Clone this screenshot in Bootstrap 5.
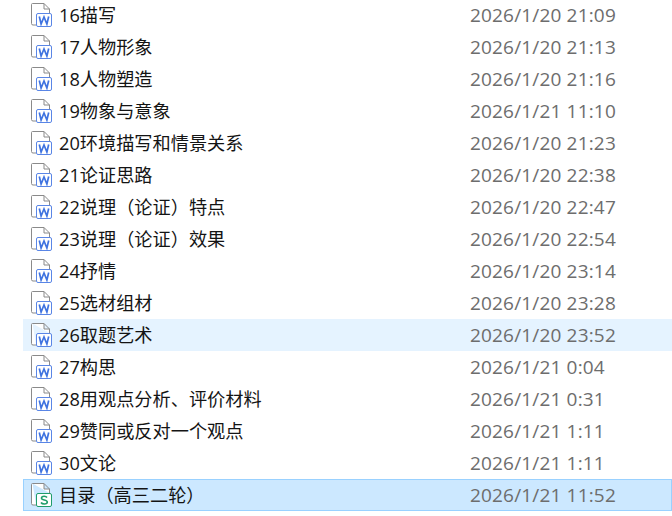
<!DOCTYPE html>
<html lang="zh"><head><meta charset="utf-8">
<link href="https://cdn.jsdelivr.net/npm/bootstrap@5.3.0/dist/css/bootstrap.min.css" rel="stylesheet">
<style>
html,body{height:516px;overflow:hidden;background:#fff}
body{font-family:"Open Sans","Noto Sans CJK SC",sans-serif;font-size:18.2px}
.flist{margin:-1px 0 0 23px}
.frow{height:32px;border:1px solid transparent}
.frow.hov{background:#e5f3ff;border-color:#e5f3ff}
.frow.sel{background:#cce8ff;border-color:#99d1ff}
.ficon{width:24px;height:24px;margin-left:6px;flex:none}
.fname{width:411px;margin-left:5px;color:#141414;white-space:nowrap;line-height:30px}
.fdate{color:#6d6d6d;white-space:nowrap;line-height:30px;font-size:19px;letter-spacing:.17px}
</style></head><body>
<svg width="0" height="0" class="position-absolute"><defs>
<symbol id="w" viewBox="0 0 24 24"><path d="M2.500.5H14L19.500 6V10M2.500.5Q1.500.5 1.500 1.500V20.500Q1.500 22 3 22H6M14 .5V6H19.500" fill="#fff" stroke="#8a8a8a"/><rect x="6.500" y="10.500" width="15" height="13" rx="1.500" fill="#fff" stroke="#5a86e6"/><path d="M9.300 13.500l1.800 7.500 2.900-7 2.900 7 1.800-7.500" fill="none" stroke="#3f73e0" stroke-width="1.700"/></symbol>
<symbol id="s" viewBox="0 0 24 24"><path d="M2.500.5H14L19.500 6V10M2.500.5Q1.500.5 1.500 1.500V20.500Q1.500 22 3 22H6M14 .5V6H19.500" fill="#fff" stroke="#8a8a8a"/><rect x="6.500" y="10.500" width="15" height="13" rx="1.500" fill="#fff" stroke="#1f9d6b"/><path d="M17 14.500Q16.200 13.200 14.200 13.200Q11.500 13.200 11.500 15.200C11.500 17.500 17.300 16.500 17.300 19Q17.300 21 14.300 21Q12 21 11 19.500" fill="none" stroke="#1f9d6b" stroke-width="1.600"/></symbol>
</defs></svg>
<div class="flist d-flex flex-column">
<div class="frow d-flex align-items-center"><svg class="ficon"><use href="#w"/></svg><div class="fname">16描写</div><div class="fdate">2026/1/20 21:09</div></div>
<div class="frow d-flex align-items-center"><svg class="ficon"><use href="#w"/></svg><div class="fname">17人物形象</div><div class="fdate">2026/1/20 21:13</div></div>
<div class="frow d-flex align-items-center"><svg class="ficon"><use href="#w"/></svg><div class="fname">18人物塑造</div><div class="fdate">2026/1/20 21:16</div></div>
<div class="frow d-flex align-items-center"><svg class="ficon"><use href="#w"/></svg><div class="fname">19物象与意象</div><div class="fdate">2026/1/21 11:10</div></div>
<div class="frow d-flex align-items-center"><svg class="ficon"><use href="#w"/></svg><div class="fname">20环境描写和情景关系</div><div class="fdate">2026/1/20 21:23</div></div>
<div class="frow d-flex align-items-center"><svg class="ficon"><use href="#w"/></svg><div class="fname">21论证思路</div><div class="fdate">2026/1/20 22:38</div></div>
<div class="frow d-flex align-items-center"><svg class="ficon"><use href="#w"/></svg><div class="fname">22说理（论证）特点</div><div class="fdate">2026/1/20 22:47</div></div>
<div class="frow d-flex align-items-center"><svg class="ficon"><use href="#w"/></svg><div class="fname">23说理（论证）效果</div><div class="fdate">2026/1/20 22:54</div></div>
<div class="frow d-flex align-items-center"><svg class="ficon"><use href="#w"/></svg><div class="fname">24抒情</div><div class="fdate">2026/1/20 23:14</div></div>
<div class="frow d-flex align-items-center"><svg class="ficon"><use href="#w"/></svg><div class="fname">25选材组材</div><div class="fdate">2026/1/20 23:28</div></div>
<div class="frow hov d-flex align-items-center"><svg class="ficon"><use href="#w"/></svg><div class="fname">26取题艺术</div><div class="fdate">2026/1/20 23:52</div></div>
<div class="frow d-flex align-items-center"><svg class="ficon"><use href="#w"/></svg><div class="fname">27构思</div><div class="fdate">2026/1/21 0:04</div></div>
<div class="frow d-flex align-items-center"><svg class="ficon"><use href="#w"/></svg><div class="fname">28用观点分析、评价材料</div><div class="fdate">2026/1/21 0:31</div></div>
<div class="frow d-flex align-items-center"><svg class="ficon"><use href="#w"/></svg><div class="fname">29赞同或反对一个观点</div><div class="fdate">2026/1/21 1:11</div></div>
<div class="frow d-flex align-items-center"><svg class="ficon"><use href="#w"/></svg><div class="fname">30文论</div><div class="fdate">2026/1/21 1:11</div></div>
<div class="frow sel d-flex align-items-center"><svg class="ficon"><use href="#s"/></svg><div class="fname">目录（高三二轮）</div><div class="fdate">2026/1/21 11:52</div></div>
</div>
</body></html>
